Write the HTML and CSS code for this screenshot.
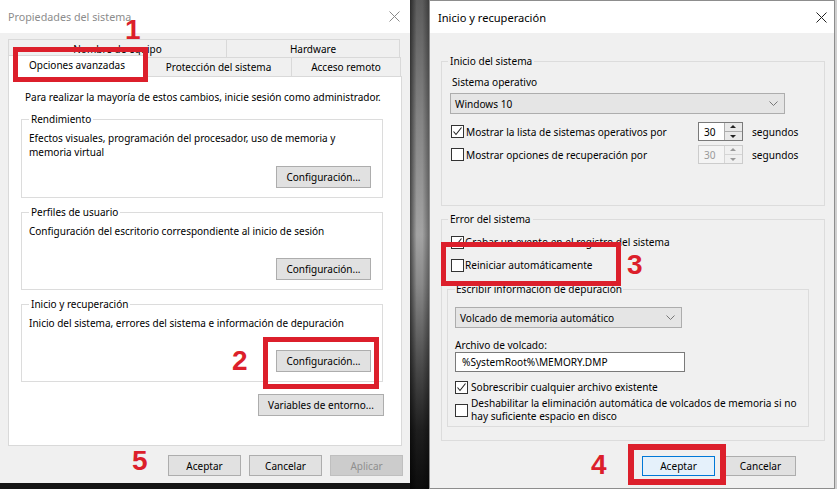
FILE: index.html
```html
<!DOCTYPE html>
<html lang="es">
<head>
<meta charset="utf-8">
<title>Propiedades del sistema</title>
<link rel="stylesheet" href="styles.css">
</head>
<body>
<div class="screen">
  <section class="dlg-left">
    <header class="titlebar inactive">
      <span class="title">Propiedades del sistema</span>
      <svg class="close" width="11" height="11" viewBox="0 0 11 11"><path d="M0.5 0.5L10.5 10.5M10.5 0.5L0.5 10.5" stroke="#8a8a8a" stroke-width="1" fill="none"/></svg>
    </header>
    <div class="lbody">
      <div class="tabs">
        <div class="tabrow back">
          <div class="tab t-nombre">Nombre de equipo</div>
          <div class="tab t-hard">Hardware</div>
        </div>
        <div class="tabrow front">
          <div class="tab sel t-opc">Opciones avanzadas</div>
          <div class="tab t-prot">Protección del sistema</div>
          <div class="tab t-acc">Acceso remoto</div>
        </div>
      </div>
      <div class="panel">
        <p class="intro">Para realizar la mayoría de estos cambios, inicie sesión como administrador.</p>
        <fieldset class="grp">
          <legend>Rendimiento</legend>
          <p class="desc">Efectos visuales, programación del procesador, uso de memoria y<br>memoria virtual</p>
          <button class="btn cfg cfg-first">Configuración...</button>
        </fieldset>
        <fieldset class="grp">
          <legend>Perfiles de usuario</legend>
          <p class="desc">Configuración del escritorio correspondiente al inicio de sesión</p>
          <button class="btn cfg">Configuración...</button>
        </fieldset>
        <fieldset class="grp">
          <legend>Inicio y recuperación</legend>
          <p class="desc">Inicio del sistema, errores del sistema e información de depuración</p>
          <button class="btn cfg">Configuración...</button>
        </fieldset>
        <div class="envrow"><button class="btn env">Variables de entorno...</button></div>
      </div>
      <div class="footer lfoot">
        <button class="btn fb">Aceptar</button>
        <button class="btn fb">Cancelar</button>
        <button class="btn fb disabled">Aplicar</button>
      </div>
    </div>
    <div class="underbar"></div>
  </section>

  <div class="gap"></div>

  <section class="dlg-right">
    <header class="titlebar active">
      <span class="title">Inicio y recuperación</span>
      <svg class="close" width="11" height="11" viewBox="0 0 11 11"><path d="M0.5 0.5L10.5 10.5M10.5 0.5L0.5 10.5" stroke="#222" stroke-width="1" fill="none"/></svg>
    </header>
    <div class="rbody">
      <fieldset class="rgrp g1">
        <legend>Inicio del sistema</legend>
        <div class="lbl so">Sistema operativo</div>
        <div class="select sel-os"><span>Windows 10</span>
          <svg width="9" height="5" viewBox="0 0 9 5"><path d="M0.5 0.5L4.5 4.5L8.5 0.5" stroke="#777" fill="none"/></svg>
        </div>
        <div class="srow r1">
          <span class="cb checked"><svg width="11" height="11" viewBox="0 0 11 11"><path d="M1.5 5.5L4 8.5L9.5 1.5" stroke="#222" stroke-width="1.1" fill="none"/></svg></span>
          <span class="slbl">Mostrar la lista de sistemas operativos por</span>
          <span class="spin"><span class="sv">30</span><span class="arrows"><span class="ar up"></span><span class="ar dn"></span></span></span>
          <span class="unit">segundos</span>
        </div>
        <div class="srow r2">
          <span class="cb"></span>
          <span class="slbl">Mostrar opciones de recuperación por</span>
          <span class="spin off"><span class="sv">30</span><span class="arrows"><span class="ar up"></span><span class="ar dn"></span></span></span>
          <span class="unit">segundos</span>
        </div>
      </fieldset>

      <fieldset class="rgrp g2">
        <legend>Error del sistema</legend>
        <div class="crow c-grabar">
          <span class="cb checked"><svg width="11" height="11" viewBox="0 0 11 11"><path d="M1.5 5.5L4 8.5L9.5 1.5" stroke="#222" stroke-width="1.1" fill="none"/></svg></span>
          <span>Grabar un evento en el registro del sistema</span>
        </div>
        <div class="crow c-reini">
          <span class="cb"></span>
          <span>Reiniciar automáticamente</span>
        </div>
        <fieldset class="sub">
          <legend>Escribir información de depuración</legend>
          <div class="select sel-dump"><span>Volcado de memoria automático</span>
            <svg width="9" height="5" viewBox="0 0 9 5"><path d="M0.5 0.5L4.5 4.5L8.5 0.5" stroke="#777" fill="none"/></svg>
          </div>
          <div class="lbl arch">Archivo de volcado:</div>
          <div class="textin">%SystemRoot%\MEMORY.DMP</div>
          <div class="crow c-sobre">
            <span class="cb checked"><svg width="11" height="11" viewBox="0 0 11 11"><path d="M1.5 5.5L4 8.5L9.5 1.5" stroke="#222" stroke-width="1.1" fill="none"/></svg></span>
            <span>Sobrescribir cualquier archivo existente</span>
          </div>
          <div class="crow c-desh">
            <span class="cb"></span>
            <span class="two">Deshabilitar la eliminación automática de volcados de memoria si no<br>hay suficiente espacio en disco</span>
          </div>
        </fieldset>
      </fieldset>

      <div class="footer rfoot">
        <button class="btn rb default">Aceptar</button>
        <button class="btn rb">Cancelar</button>
      </div>
    </div>
  </section>
  <div class="edge"></div>

  <div class="mark m1"></div>
  <div class="mark m2"></div>
  <div class="mark m3"></div>
  <div class="mark m4"></div>
  <span class="num n1">1</span>
  <span class="num n2">2</span>
  <span class="num n3">3</span>
  <span class="num n4">4</span>
  <span class="num n5">5</span>
</div>
</body>
</html>
```

FILE: styles.css
```css
html, body {
  margin: 0;
  padding: 0;
}
body {
  background: #141414;
  font-family: "Noto Sans", "Liberation Sans", sans-serif;
  font-size: 10px;
  color: #000;
}
.screen {
  position: relative;
  width: 837px;
  height: 489px;
  display: flex;
  align-items: flex-start;
  overflow: hidden;
}

/* ---------- common ---------- */
.titlebar {
  display: flex;
  align-items: center;
  justify-content: space-between;
  background: #fff;
  flex: none;
}
.btn {
  font: inherit;
  color: #000;
  background: #e1e1e1;
  border: 1px solid #adadad;
  border-radius: 0;
  padding: 0;
  margin: 0;
  box-sizing: border-box;
  display: flex;
  align-items: center;
  justify-content: center;
  white-space: nowrap;
}
.btn.disabled {
  background: #cccccc;
  border-color: #bfbfbf;
  color: #8f8f8f;
}
fieldset {
  margin: 0;
  min-inline-size: 0;
  box-sizing: border-box;
}
legend {
  padding: 0 2px;
  line-height: 14px;
}
p { margin: 0; }

/* ---------- left dialog ---------- */
.dlg-left {
  width: 410px;
  height: 483px;
  flex: none;
  background: #f0f0f0;
  display: flex;
  flex-direction: column;
  position: relative;
}
.dlg-left .titlebar {
  height: 33px;
  padding: 0 10px 0 8px;
}
.dlg-left .title {
  color: #8c8c8c;
  font-size: 10.75px;
}
.dlg-left .close { margin-bottom: 1px; }
.lbody {
  padding: 0 8px;
  display: flex;
  flex-direction: column;
}
.tabs { margin-top: 6px; }
.tabrow {
  display: flex;
  width: 392px;
}
.tabrow.back { height: 18px; }
.tabrow.front { height: 19px; }
.tab {
  box-sizing: border-box;
  border: 1px solid #d9d9d9;
  border-bottom: none;
  background: #f0f0f0;
  display: flex;
  align-items: center;
  justify-content: center;
  white-space: nowrap;
  flex: none;
}
.tab + .tab { margin-left: -1px; }
.back .tab { height: 18px; }
.front .tab { height: 19px; }
.t-nombre { width: 219px; }
.t-hard { width: 174px; }
.t-opc { width: 138px; }
.t-prot { width: 147px; }
.t-acc { width: 110px; }
.tab.sel {
  background: #fff;
  height: 22px;
  margin-top: -2px;
  position: relative;
  z-index: 1;
  padding-bottom: 3px;
}
.panel {
  width: 394px;
  height: 370px;
  box-sizing: border-box;
  background: #fff;
  border: 1px solid #d9d9d9;
  padding: 13px 18px 0 12px;
}
.intro {
  line-height: 14px;
  padding-left: 4px;
  white-space: nowrap;
}
.grp {
  border: 1px solid #dcdcdc;
  padding: 5px 11px 9px 7px;
  margin-top: 7px;
}
.grp:first-of-type { margin-top: 8px; }
.grp .desc {
  line-height: 14px;
  white-space: nowrap;
}
.btn.cfg {
  width: 95px;
  height: 22px;
  margin-left: auto;
  margin-top: 20px;
}
.btn.cfg.cfg-first { margin-top: 7px; }
.envrow {
  display: flex;
  justify-content: flex-end;
  margin-top: 12px;
  margin-right: -1px;
}
.btn.env {
  width: 126px;
  height: 22px;
}
.footer {
  display: flex;
  justify-content: flex-end;
}
.lfoot {
  margin-top: 9px;
  margin-right: -1px;
  gap: 8px;
}
.btn.fb {
  width: 73px;
  height: 21px;
}
.underbar { flex: 1; }

/* ---------- gap between dialogs ---------- */
.gap {
  width: 19px;
  height: 489px;
  flex: none;
  background:
    linear-gradient(to right, rgba(0,0,0,0.55), rgba(0,0,0,0) 35%, rgba(0,0,0,0) 65%, rgba(0,0,0,0.35)),
    linear-gradient(to bottom, #5c5c5c 0%, #858585 25%, #a3a3a3 48%, #8a8a8a 58%, #4a4a4a 75%, #1e1e1e 88%, #0c0c0c 100%);
}

/* ---------- right dialog ---------- */
.dlg-right {
  width: 406px;
  height: 489px;
  flex: none;
  box-sizing: border-box;
  border: 1px solid #8d8d8d;
  background: #f0f0f0;
  display: flex;
  flex-direction: column;
  font-size: 10.1px;
}
.dlg-right .titlebar {
  height: 32px;
  padding: 0 7px 0 8px;
}
.dlg-right .title {
  font-size: 11.1px;
  color: #000;
}
.rbody {
  padding: 0 9px 0 11px;
  display: flex;
  flex-direction: column;
}
.rgrp {
  border: 1px solid #dcdcdc;
}
.rgrp > legend { margin-left: -2px; }
.g1 {
  margin-top: 21px;
  padding: 7px 8px 41px 8px;
}
.g2 {
  margin-top: 6px;
  padding: 9px 15px 13px 9px;
}
.g2 > legend { margin-left: -3px; }
.lbl { line-height: 14px; white-space: nowrap; }
.lbl.so { padding-left: 2px; }
.select {
  box-sizing: border-box;
  height: 21px;
  background: #e5e5e5;
  border: 1px solid #adadad;
  display: flex;
  align-items: center;
  justify-content: space-between;
  padding: 0 6px 0 4px;
  white-space: nowrap;
}
.sel-os {
  width: 335px;
  margin-top: 4px;
}
.srow {
  display: flex;
  align-items: center;
  height: 19px;
  white-space: nowrap;
}
.srow.r1 { margin-top: 8px; }
.srow.r2 { margin-top: 4px; }
.cb {
  box-sizing: border-box;
  width: 13px;
  height: 13px;
  border: 1px solid #333;
  background: #fff;
  flex: none;
  display: flex;
  align-items: center;
  justify-content: center;
}
.srow .cb { margin-left: 1px; }
.slbl {
  width: 232px;
  margin-left: 2px;
  flex: none;
}
.spin {
  box-sizing: border-box;
  width: 45px;
  height: 19px;
  border: 1px solid #7a7a7a;
  background: #fff;
  display: flex;
  align-items: stretch;
  flex: none;
}
.spin .sv {
  flex: 1;
  padding-left: 5px;
  display: flex;
  align-items: center;
}
.spin .arrows {
  width: 17px;
  display: flex;
  flex-direction: column;
  border-left: 1px solid #adadad;
}
.spin .ar {
  flex: 1;
  background: #e9e9e9;
  position: relative;
}
.spin .ar.up { border-bottom: 1px solid #adadad; }
.spin .ar::after {
  content: "";
  position: absolute;
  left: 5px;
  top: 2px;
  border-left: 3px solid transparent;
  border-right: 3px solid transparent;
}
.spin .ar.up::after { border-bottom: 3px solid #222; }
.spin .ar.dn::after { border-top: 3px solid #222; top: 3px; }
.spin.off {
  border-color: #cccccc;
  color: #9a9a9a;
  background: #f4f4f4;
}
.spin.off .arrows { border-left-color: #d5d5d5; }
.spin.off .ar { background: #f0f0f0; }
.spin.off .ar.up { border-bottom-color: #d5d5d5; }
.spin.off .ar.up::after { border-bottom-color: #9a9a9a; }
.spin.off .ar.dn::after { border-top-color: #9a9a9a; }
.unit { margin-left: 9px; }

.crow {
  display: flex;
  align-items: center;
  min-height: 14px;
  line-height: 14px;
  white-space: nowrap;
}
.crow .cb { margin-right: 1px; }
.c-reini { margin-top: 9px; }
.sub {
  border: 1px solid #dcdcdc;
  margin: 10px 0 0 -4px;
  padding: 11px 7px 3px 7px;
}
.sub > legend { padding: 0 1px; }
.sel-dump { width: 227px; }
.lbl.arch {
  line-height: 13px;
  margin-top: 11px;
}
.textin {
  box-sizing: border-box;
  width: 230px;
  height: 20px;
  border: 1px solid #7a7a7a;
  background: #fff;
  display: flex;
  align-items: center;
  padding-left: 6px;
  white-space: nowrap;
}
.sub .crow .cb { margin-right: 3px; }
.c-sobre { margin-top: 8px; }
.c-desh { margin-top: 3px; }
.c-desh .two { line-height: 13px; }

.rfoot {
  margin-top: 15px;
  margin-right: 29px;
  gap: 10px;
}
.btn.rb { height: 20px; }
.btn.rb.default {
  width: 73px;
  border-color: #0078d7;
  background: #e5f1fb;
}
.btn.rb + .btn.rb { width: 71px; }

.edge {
  flex: 1;
  height: 489px;
  background: #cfcfcf;
}

/* ---------- annotations ---------- */
.mark {
  position: absolute;
  box-sizing: border-box;
  border: 5px solid #dc1f2b;
  z-index: 5;
}
.m1 { left: 13px; top: 47px; width: 135px; height: 35px; }
.m2 { left: 263px; top: 337px; width: 116px; height: 52px; }
.m3 { left: 441px; top: 242px; width: 180px; height: 44px; }
.m4 { left: 628px; top: 444px; width: 98px; height: 41px; border-width: 6px; }
.num {
  position: absolute;
  z-index: 6;
  font-family: "Liberation Sans", Arial, sans-serif;
  font-weight: bold;
  font-size: 28px;
  line-height: 20px;
  color: #dc1f2b;
}
.n1 { left: 125px; top: 20px; }
.n2 { left: 232px; top: 351px; }
.n3 { left: 627px; top: 255px; }
.n4 { left: 591px; top: 455px; }
.n5 { left: 132px; top: 451px; }
```
